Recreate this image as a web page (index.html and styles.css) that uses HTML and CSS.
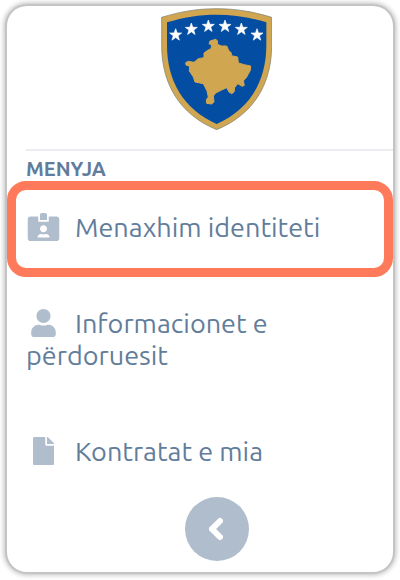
FILE: index.html
```html
<!DOCTYPE html>
<html lang="sq">
<head>
<meta charset="utf-8">
<meta name="viewport" content="width=device-width, initial-scale=1">
<title>Menyja</title>
<link rel="stylesheet" href="styles.css">
</head>
<body>
<aside class="sidebar">
  <header class="brand">
    <svg class="crest" viewBox="33 23 333 366" role="img" aria-label="Stema e Kosovës">
      <defs>
        <path id="star" d="M0-19 4.500-6.200 18-5.900 7.200 2.300 11.200 15.400 0 7.600-11.200 15.400-7.200 2.300-18-5.900-4.500-6.200Z"/>
      </defs>
      <path fill="#d0a650" stroke="#77796a" stroke-width="2" d="M35 51C90 34 142 25 200 25S310 34 365 51V135C365 250 312 342 200 388C88 342 35 250 35 135Z"/>
      <path fill="#034da3" d="M51 66C100 51 148 43 200 43S300 51 349 66V135C349 240 301 327 200 371C99 327 51 240 51 135Z"/>
      <g fill="#fff" stroke="#fff" stroke-width="2">
        <use href="#star" x="77" y="104"/>
        <use href="#star" x="124" y="87"/>
        <use href="#star" x="175" y="78"/>
        <use href="#star" x="225" y="78"/>
        <use href="#star" x="274" y="87"/>
        <use href="#star" x="321" y="104"/>
      </g>
      <path fill="#d0a650" stroke="#d0a650" stroke-width="3" stroke-linejoin="round" transform="translate(105 90)" d="M75 32 92 27 98 32 97 42 110 47 125 47 131 60 139 68 139 76 158 80 160 98 178 103 197 107 196 120 185 140 175 152 178 165 172 168 158 160 149 172 147 185 140 190 132 185 125 172 108 180 92 188 85 197 87 215 80 221 65 219 64 208 70 200 66 182 55 160 30 155 25 140 13 122 14 108 3 104 2 97 10 93 27 96 40 85 57 82 57 68 68 60 78 55 80 45 72 40Z"/>
    </svg>
  </header>
  <nav class="menu" aria-labelledby="menu-title">
    <h2 class="menu-title" id="menu-title">MENYJA</h2>
    <ul class="menu-list">
      <li><a class="menu-link menu-link-active" href="#identity"><svg class="icon" viewBox="0 0 576 512" aria-hidden="true"><path d="M528 64H384v96H192V64H48C21.500 64 0 85.500 0 112v352c0 26.500 21.500 48 48 48h480c26.500 0 48-21.500 48-48V112c0-26.500-21.500-48-48-48zM288 224c35.300 0 64 28.700 64 64s-28.700 64-64 64-64-28.700-64-64 28.700-64 64-64zm93.300 224H194.700c-10.400 0-18.800-10-15.600-19.800 8.300-25.600 32.400-44.200 60.900-44.200h8.200c24.600 10.200 54.300 10.700 79.600 0h8.200c28.400 0 52.500 18.500 60.900 44.200 3.200 9.800-5.200 19.800-15.600 19.800zM352 32c0-17.700-14.300-32-32-32h-64c-17.700 0-32 14.300-32 32v96h128V32z"/></svg>Menaxhim identiteti</a></li>
      <li><a class="menu-link" href="#user"><svg class="icon" viewBox="0 0 448 512" aria-hidden="true"><path d="M224 256c70.700 0 128-57.300 128-128S294.700 0 224 0 96 57.300 96 128s57.300 128 128 128zm89.600 32h-16.700c-44.400 21.300-101.400 21.300-145.800 0h-16.700C60.200 288 0 348.200 0 422.400V464c0 26.500 21.500 48 48 48h352c26.500 0 48-21.500 48-48v-41.600c0-74.200-60.200-134.400-134.400-134.400z"/></svg>Informacionet e përdoruesit</a></li>
      <li><a class="menu-link" href="#contracts"><svg class="icon" viewBox="0 0 384 512" aria-hidden="true"><path d="M224 136V0H24C10.700 0 0 10.700 0 24v464c0 13.300 10.700 24 24 24h336c13.300 0 24-10.700 24-24V160H248c-13.200 0-24-10.800-24-24zm160-14.100v6.100H256V0h6.100c6.400 0 12.500 2.500 17 7l97.900 98c4.500 4.500 7 10.600 7 16.900z"/></svg>Kontratat e mia</a></li>
    </ul>
  </nav>
  <footer class="collapse">
    <button class="collapse-button" type="button" aria-label="Mbyll menynë">
      <svg class="chevron" viewBox="0 0 16 24" aria-hidden="true"><path d="M11 4 3 12l8 8"/></svg>
    </button>
  </footer>
</aside>
</body>
</html>
```
FILE: styles.css
```css
* {
  box-sizing: border-box;
}

body {
  margin: 0;
  padding: 6px 7px 8px;
  background: #fff;
  color: #627d9b;
  font-family: Ubuntu, "Noto Sans", "Open Sans", sans-serif;
}

.sidebar {
  border-radius: 20px;
  background: #fff;
  box-shadow: 0 0 0 2px #c4c4c4, 0 0 5px 3px #bcbcbc;
}

.brand {
  margin-left: 19px;
  padding: 2px 0 19px 14px;
  border-bottom: 2px solid #eaecf0;
  text-align: center;
}

.crest {
  display: block;
  width: 111px;
  height: 122px;
  margin: 0 auto;
}

.menu-title {
  margin: 0;
  padding: 6px 19px 0;
  font-size: 20px;
  font-weight: 700;
  line-height: 24px;
}

.menu-list {
  margin: 0;
  padding: 0;
  list-style: none;
}

.menu-link {
  display: block;
  padding: 30px 19px 34px;
  color: inherit;
  font-size: 27px;
  line-height: 32px;
  text-decoration: none;
}

.menu-link-active {
  padding: 21px 10px 25px;
  border: 9px solid #ff7a5a;
  border-radius: 19px;
}

.icon {
  width: 35px;
  height: 28px;
  margin-right: 14px;
  fill: #b0bdcc;
  vertical-align: -4px;
}

.collapse {
  display: flex;
  justify-content: center;
  margin-top: -4px;
  padding: 0 0 11px 33px;
}

.collapse-button {
  display: grid;
  place-items: center;
  width: 64px;
  height: 64px;
  padding: 0;
  border: 0;
  border-radius: 50%;
  background: #b0bdcc;
  cursor: pointer;
}

.chevron {
  width: 16px;
  height: 24px;
  fill: none;
  stroke: #fff;
  stroke-width: 6px;
  stroke-linecap: round;
}
```
